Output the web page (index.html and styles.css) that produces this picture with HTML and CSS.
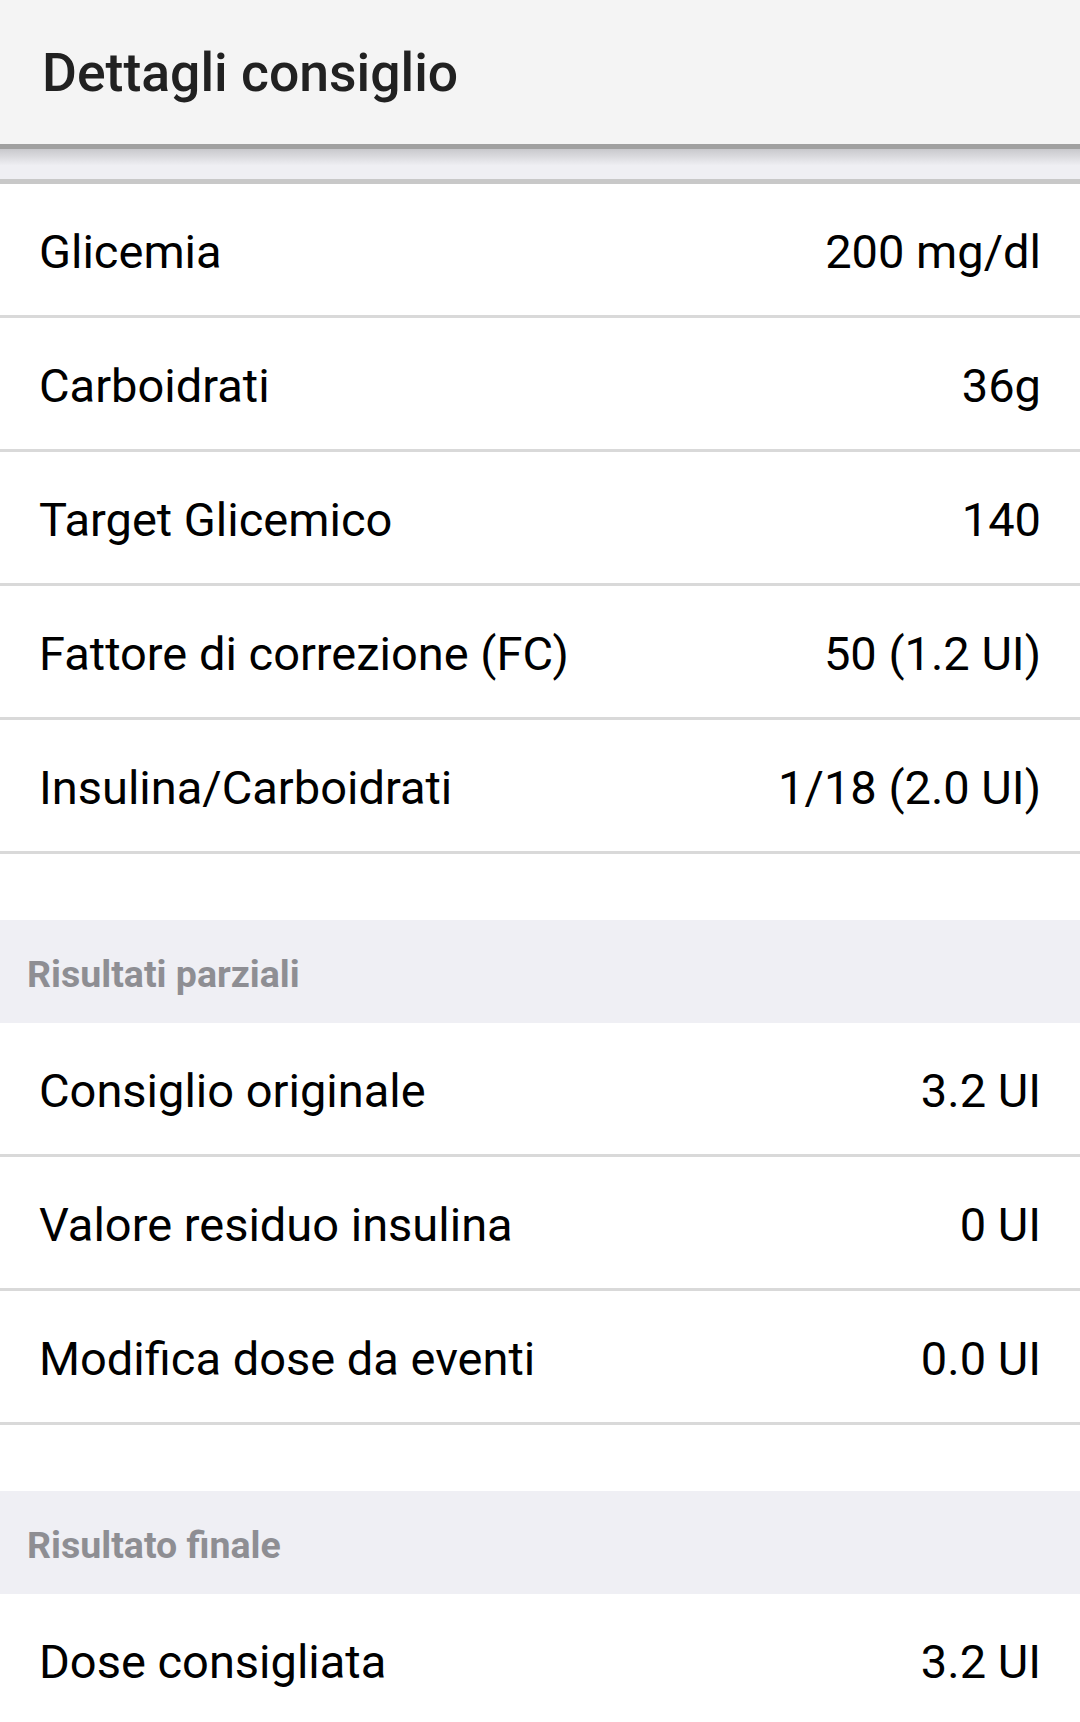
FILE: index.html
```html
<!DOCTYPE html>
<html lang="it">
<head>
  <meta charset="UTF-8">
  <meta name="viewport" content="width=device-width, initial-scale=1.0">
  <title>Dettagli consiglio</title>
  <link rel="stylesheet" href="styles.css">
</head>
<body>
  <header class="topbar">
    <h1 class="topbar-title">Dettagli consiglio</h1>
  </header>
  <div class="shade"></div>

  <ul class="rows">
    <li class="row"><span>Glicemia</span><span>200 mg/dl</span></li>
    <li class="row"><span>Carboidrati</span><span>36g</span></li>
    <li class="row"><span>Target Glicemico</span><span>140</span></li>
    <li class="row"><span>Fattore di correzione (FC)</span><span>50 (1.2 UI)</span></li>
    <li class="row"><span>Insulina/Carboidrati</span><span>1/18 (2.0 UI)</span></li>
  </ul>

  <div class="section-title">Risultati parziali</div>
  <ul class="rows">
    <li class="row"><span>Consiglio originale</span><span>3.2 UI</span></li>
    <li class="row"><span>Valore residuo insulina</span><span>0 UI</span></li>
    <li class="row"><span>Modifica dose da eventi</span><span>0.0 UI</span></li>
  </ul>

  <div class="section-title">Risultato finale</div>
  <ul class="rows">
    <li class="row last"><span>Dose consigliata</span><span>3.2 UI</span></li>
  </ul>
</body>
</html>
```

FILE: styles.css
```css
body {
  margin: 0;
  font-family: Roboto, "Noto Sans", Arial, sans-serif;
  background-color: #ffffff;
  color: #000000;
}
.topbar {
  height: 144px;
  display: flex;
  align-items: center;
  padding-left: 42px;
  background-color: #f4f4f4;
  border-bottom: 5px solid #a0a0a0;
}
.topbar-title {
  margin: 0;
  font-size: 53.5px;
  font-weight: 500;
  color: #212121;
}
/* grey strip under the toolbar */
.shade {
  height: 30px;
  background: linear-gradient(#c8c8cc, #efeff3 55%);
  border-bottom: 5px solid #c8c8c8;
}
.rows {
  list-style: none;
  margin: 0 0 66px 0;
  padding: 0;
}
.row {
  box-sizing: border-box;
  height: 134px;
  display: flex;
  justify-content: space-between;
  align-items: center;
  padding: 4px 39px 0 39px;
  font-size: 47px;
  border-bottom: 3px solid #d9d9d9;
}
.row.last {
  height: 131px;
  border-bottom: none;
}
.section-title {
  box-sizing: border-box;
  height: 103px;
  display: flex;
  align-items: center;
  padding: 4px 0 0 27px;
  background-color: #efeff4;
  color: #8e8e93;
  font-size: 37.5px;
  font-weight: 700;
}
```
